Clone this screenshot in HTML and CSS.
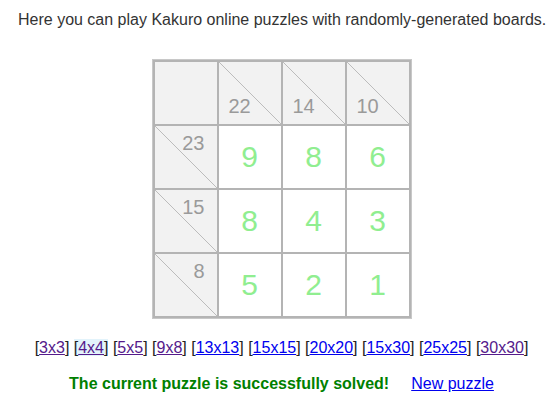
FILE: index.html
```html
<!DOCTYPE html>
<html lang="en">
<head>
<meta charset="utf-8">
<title>Kakuro</title>
<link rel="stylesheet" href="styles.css">
</head>
<body>
<div class="page">
  <p class="intro">Here you can play Kakuro online puzzles with randomly-generated boards.</p>

  <div class="board">
    <div class="cell blank"></div>
    <div class="cell clue down"><span>22</span></div>
    <div class="cell clue down"><span>14</span></div>
    <div class="cell clue down"><span>10</span></div>

    <div class="cell clue across"><span>23</span></div>
    <div class="cell value">9</div>
    <div class="cell value">8</div>
    <div class="cell value">6</div>

    <div class="cell clue across"><span>15</span></div>
    <div class="cell value">8</div>
    <div class="cell value">4</div>
    <div class="cell value">3</div>

    <div class="cell clue across"><span>8</span></div>
    <div class="cell value">5</div>
    <div class="cell value">2</div>
    <div class="cell value">1</div>
  </div>

  <p class="sizes">[<a class="visited" href="#3x3">3x3</a>] <span class="current">[<a class="visited" href="#4x4">4x4</a>]</span> [<a class="visited" href="#5x5">5x5</a>] [<a class="visited" href="#9x8">9x8</a>] [<a href="#13x13">13x13</a>] [<a href="#15x15">15x15</a>] [<a href="#20x20">20x20</a>] [<a href="#15x30">15x30</a>] [<a href="#25x25">25x25</a>] [<a class="visited" href="#30x30">30x30</a>]</p>

  <p class="status"><span class="solved">The current puzzle is successfully solved!</span><a class="new" href="#new">New puzzle</a></p>
</div>
</body>
</html>
```

FILE: styles.css
```css
html, body {
  margin: 0;
  padding: 0;
  background: #ffffff;
}

body {
  font-family: "Liberation Sans", Arial, sans-serif;
  font-size: 16px;
  color: #333333;
}

.page {
  width: 527px;
  margin-left: 18px;
  padding-top: 11px;
  text-align: center;
}

.intro {
  margin: 0;
  line-height: 18px;
  white-space: nowrap;
}

.board {
  display: grid;
  grid-template-columns: repeat(4, 62px);
  grid-auto-rows: 62px;
  gap: 2px;
  width: max-content;
  margin: 30px auto 0;
  padding: 2px;
  background: #b4b4b4;
  border: 1px solid #c8c8c8;
}

.cell {
  background: #ffffff;
}

.blank,
.clue {
  background: #f2f2f2;
}

.clue {
  display: flex;
  font-size: 20px;
  line-height: 20px;
  color: #9a9a9a;
  background-image: linear-gradient(to top right, transparent calc(50% - 0.6px), #bcbcbc 50%, transparent calc(50% + 0.6px));
}

.clue.down {
  align-items: flex-end;
  justify-content: flex-start;
  padding: 0 0 8px 10px;
}

.clue.across {
  align-items: flex-start;
  justify-content: flex-end;
  padding: 7px 12px 0 0;
}

.value {
  display: flex;
  align-items: center;
  justify-content: center;
  font-size: 30px;
  color: #90ee90;
}

.sizes {
  margin: 20px 0 0;
  line-height: 18px;
  color: #222222;
}

a {
  color: #0000ee;
  text-decoration: underline;
}

a.visited {
  color: #551a8b;
}

.current {
  background: #e2f3fb;
}

.status {
  margin: 18px 0 0;
  line-height: 18px;
}

.solved {
  font-weight: bold;
  color: #008000;
}

.new {
  margin-left: 22px;
}
```
